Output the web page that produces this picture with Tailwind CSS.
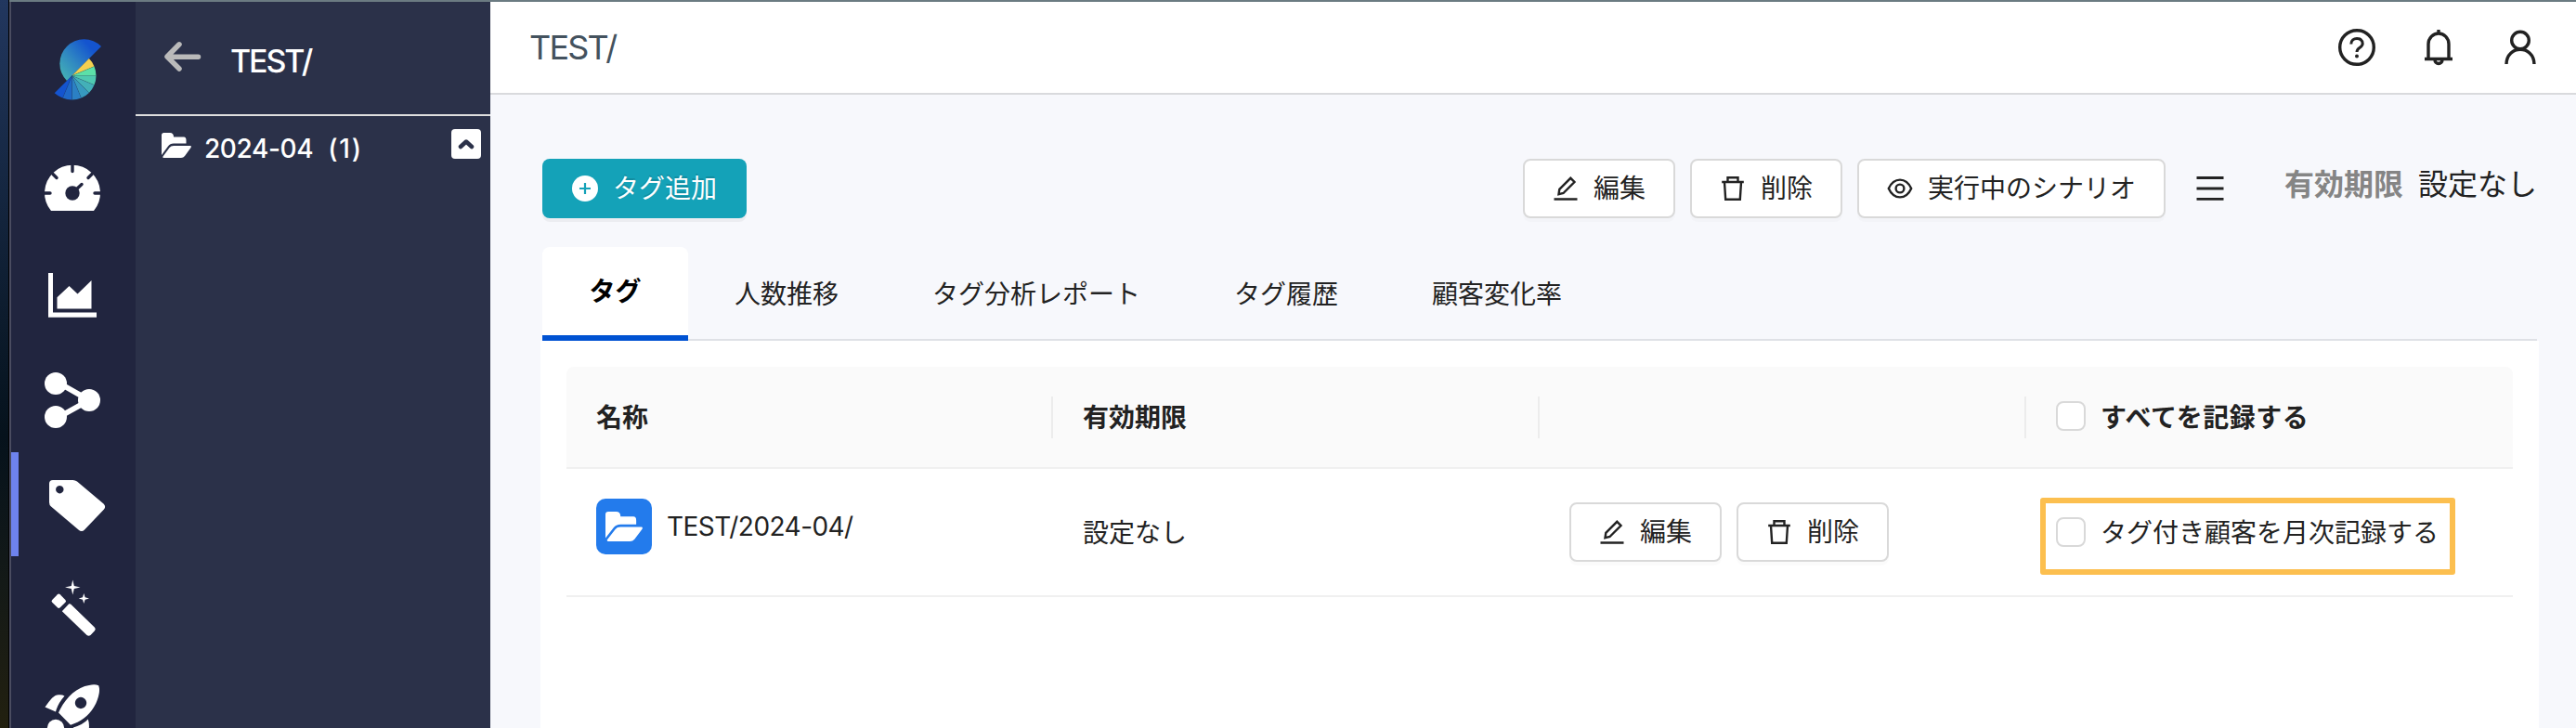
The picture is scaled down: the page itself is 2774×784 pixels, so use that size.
<!DOCTYPE html>
<html lang="ja">
<head>
<meta charset="utf-8">
<title>TEST/</title>
<script src="https://cdn.jsdelivr.net/npm/@tailwindcss/browser@4"></script>
</head>
<body class="flex h-[784px] w-[2774px] overflow-hidden bg-[#f7f8fc] font-[Inter,'Noto_Sans_CJK_JP',sans-serif] text-[28px] leading-[40px] text-[#222]">
<div class="w-[10px] shrink-0 border-r border-black bg-linear-to-b from-[#22375f] from-0% via-[#06121c] via-60% to-[#22200f] to-100%"></div>
<div class="flex h-full min-w-0 grow flex-col border-t-2 border-[#6b7b82]">
<div class="flex min-h-0 grow">

<!-- Icon rail -->
<nav class="flex w-[136px] shrink-0 flex-col overflow-hidden border-l-2 border-[#4a4c60] bg-[#21253f] *:-ml-[2px]">
<svg class="h-[149px] w-[136px] shrink-0" viewBox="10 2 136 149">
<defs><linearGradient id="g" gradientUnits="userSpaceOnUse" x1="66" y1="84" x2="100" y2="54"><stop stop-color="#45b3b5"/><stop offset=".5" stop-color="#2f86c2"/><stop offset="1" stop-color="#1454cf"/></linearGradient></defs>
<path fill="url(#g)" d="M109 50A26 26 0 1 0 72 87Z"/>
<g transform="translate(77.5 81.5)">
<path fill="#f4d04f" d="M0 0L18.4-18.4A26 26 0 0 1 24-10Z"/>
<path fill="#5ce0a8" d="M0 0L24-10A26 26 0 0 1 26 0Z"/>
<path fill="#4fc9b0" d="M0 0L26 0A26 26 0 0 1 24 10Z"/>
<path fill="#43b0b8" d="M0 0L24 10A26 26 0 0 1 18.4 18.4Z"/>
<path fill="#3799bf" d="M0 0L18.4 18.4A26 26 0 0 1 10 24Z"/>
<path fill="#2b80c4" d="M0 0L10 24A26 26 0 0 1 0 26Z"/>
<path fill="#1f68c8" d="M0 0L0 26A26 26 0 0 1 -10 24Z"/>
<path fill="#1454cf" d="M0 0L-10 24A26 26 0 0 1 -18.8 18.8Z"/>
<path stroke="#21253f" stroke-opacity=".3" stroke-width=".5" fill="none" d="M0 0L24-10M0 0L24 10M0 0L18.4 18.4M0 0L10 24M0 0V26M0 0L-10 24"/></g>
</svg>
<svg class="h-[112px] w-[136px] shrink-0" viewBox="10 151 136 112"><path fill="#fff" d="M55 227A30 30 0 1 1 101 227Z"/><circle cx="78" cy="208" r="7.7" fill="#21253f"/><path stroke="#21253f" stroke-width="3.4" stroke-linecap="round" d="M80 206L88 198.500M78 177v7.500M57 187.500l4 4M99 187.500l-4 4M47 208h7M109 208h-7"/></svg>
<svg class="h-[112px] w-[136px] shrink-0" viewBox="10 263 136 112"><path fill="#fff" d="M52 294h5v42.500h47v5.200H52zM61.500 320.300L74.500 308l9 8.500L98.500 302v30.500h-37z"/></svg>
<svg class="h-[112px] w-[136px] shrink-0" viewBox="10 375 136 112"><g fill="#fff"><circle cx="60" cy="413" r="12"/><circle cx="60" cy="449" r="12"/><circle cx="96" cy="431" r="12"/></g><path stroke="#fff" stroke-width="6" fill="none" d="M60 410.500L96 431L60 451"/></svg>
<div class="flex shrink-0"><div class="h-[112px] w-[10px] border-l-2 border-[#8f93f0] bg-[#6e83ee]"></div>
<svg class="h-[112px] w-[126px]" viewBox="20 487 126 112"><path fill="#fff" fill-rule="evenodd" d="M57 517H78.500Q81 517 83 518.500L111.500 542.500Q114.500 545.500 112 548.500L91 570.500Q88 573.500 84.500 570.500L55 545.500Q53 543.800 53 541V521Q53 517 57 517ZM64.300 523a4.200 4.200 0 1 0 .01 0Z"/></svg></div>
<svg class="h-[112px] w-[136px] shrink-0" viewBox="10 599 136 112"><g fill="#fff"><rect x="57.300" y="641.300" width="12" height="12" rx="2" transform="rotate(45 63.300 647.300)"/><path d="M74.300 650.300Q75.300 649.800 76.300 650.800L102 675.800Q103.500 677.500 102 679.300L97.500 683.900Q95.500 685.500 93.500 683.900L66.800 658.300Z"/><path d="M78.300 624.500L79.800 631L86.500 632.500L79.800 634L78.300 640.500L76.800 634L70 632.500L76.800 631ZM90.300 639L91.600 643.200L96 644.500L91.600 645.800L90.300 650L89 645.800L84.700 644.500L89 643.200Z"/></g></svg>
<svg class="h-[112px] w-[136px] shrink-0" viewBox="10 711 136 112"><g fill="#fff"><path fill-rule="evenodd" d="M63 767.500C70 752 82 740 96 738Q102 736.500 106.200 738.200Q108 743 106 750C102 765 91 776 76 780.800ZM87 750.800a6.200 6.200 0 1 0 .01 0Z"/><path d="M48.500 761.500C55 752 59 747.500 64 748.200Q67 748 69.500 749.500Q62 758 60 766.500ZM79 783.500Q90 780 94.800 774.500Q97 781 95 789H76Z"/><circle cx="60" cy="784" r="9.200"/></g></svg>
</nav>

<!-- Folder panel -->
<aside class="flex w-[382px] shrink-0 flex-col bg-[#2b3149] text-white">
<div class="flex h-[123px] shrink-0 items-center gap-[31px] border-b-2 border-[#dedede] pl-[30px] pb-[2px]">
<svg class="mb-[1px] h-[34px] w-[41px]" viewBox="0 0 41 34" fill="none" stroke="#bababa" stroke-width="5.500" stroke-linecap="round" stroke-linejoin="round"><path d="M17 3.800L4 17L17 30M5 17.200H37.500"/></svg>
<span class="mt-[8px] text-[34px] font-medium tracking-[-2.1px]">TEST/</span>
</div>
<div class="flex h-[66px] items-center pr-[10px] pl-[28px]">
<svg class="mb-[4px] h-[27px] w-[32px]" viewBox="0 0 32 27" fill="#fff"><path d="M0 2.500Q0 0 2.500 0H9Q13 0 13 4.500H24Q26.500 4.500 26.500 8V11.500H13Q9 11.500 7 14.500L0 24ZM1.500 25.500L8.500 16Q10 14 13 14H31Q32.500 14 31.500 16L25 25Q23.500 27 21 27H2.500Q1 27 1.500 25.500Z"/></svg>
<span class="mt-[3px] ml-[14px] font-medium tracking-[-0.4px]">2024-04</span><span class="mt-[3px] ml-[16px] font-medium tracking-[1.8px]">(1)</span>
<span class="mb-[6px] ml-auto flex size-[32px] items-center justify-center rounded-[4px] bg-white"><svg class="h-[12px] w-[18px]" viewBox="0 0 18 12" fill="none" stroke="#2b3149" stroke-width="4.500" stroke-linecap="round" stroke-linejoin="round"><path d="M3 9L9 3.500L15 9"/></svg></span>
</div>
</aside>

<main class="flex min-w-0 grow flex-col">
<header class="flex h-[100px] shrink-0 items-center border-b-2 border-[#d9dadd] bg-white pr-[38px] pl-[42px]">
<h1 class="text-[36px] tracking-[-1.8px] text-[#44525e]">TEST/</h1>
<div class="ml-auto flex items-center text-[#222]">
<svg class="h-[44px] w-[44px]" viewBox="0 0 44 44" fill="none" stroke="currentColor" stroke-width="3.400"><circle cx="22" cy="22" r="18.300"/><path stroke-width="3" d="M15.800 18.500C15.800 10.500 28.200 10.500 28.200 18C28.200 22.500 22 22 22 27"/><circle cx="22" cy="31.500" r="2" fill="currentColor" stroke="none"/></svg>
<svg class="ml-[44px] h-[44px] w-[44px]" viewBox="0 0 44 44" fill="none" stroke="currentColor" stroke-width="3.400"><path d="M11 34.500V18.500A11 11.500 0 0 1 33 18.500V34.500M7 34.500H37M22 3V8M18 35.500A4 4 0 0 0 26 35.500"/></svg>
<svg class="ml-[44px] h-[44px] w-[44px]" viewBox="0 0 44 44" fill="none" stroke="currentColor" stroke-width="3.400"><circle cx="22" cy="14.500" r="9.300"/><path d="M7 40C7.500 19 36.500 19 37 40"/></svg>
</div>
</header>

<!-- Toolbar -->
<div class="flex h-[162px] shrink-0 items-start pt-[69px] pr-[42px] pl-[56px]">
<button class="flex h-[64px] w-[220px] items-center gap-[16px] rounded-[8px] bg-[#14a2b8] pl-[32px] text-white shadow-[0_4px_0_rgba(0,0,0,0.045)]"><svg class="size-[28px]" viewBox="0 0 28 28"><circle cx="14" cy="14" r="14" fill="#fff"/><path stroke="#14a2b8" stroke-width="2.200" d="M8 14H20M14 8V20"/></svg><span class="text-shadow-[0_-2px_0_rgba(0,0,0,0.12)]">タグ追加</span></button>
<button class="ml-auto flex h-[64px] items-center gap-[16px] rounded-[8px] border-2 border-[#d9d9d9] bg-white px-[30px] shadow-[0_4px_0_rgba(0,0,0,0.016)]"><svg class="size-[28px]" viewBox="0 0 28 28" fill="none" stroke="currentColor" stroke-width="2.400"><path d="M1.500 25.500H26.500M6.500 20.200L7.300 14.800L19.300 2.800L23.500 7L11.500 19Z"/></svg><span>編集</span></button>
<button class="ml-[16px] flex h-[64px] items-center gap-[16px] rounded-[8px] border-2 border-[#d9d9d9] bg-white px-[30px] shadow-[0_4px_0_rgba(0,0,0,0.016)]"><svg class="size-[28px]" viewBox="0 0 28 28" fill="none" stroke="currentColor" stroke-width="2.400"><path d="M2.200 7H25.800M8.500 7V2.200H19.500V7M5 7L6.200 25.800H21.800L23 7"/></svg><span>削除</span></button>
<button class="ml-[16px] flex h-[64px] items-center gap-[16px] rounded-[8px] border-2 border-[#d9d9d9] bg-white px-[30px] shadow-[0_4px_0_rgba(0,0,0,0.016)]"><svg class="size-[28px]" viewBox="0 0 28 28" fill="none" stroke="currentColor" stroke-width="2.400"><path d="M1.800 14C7.500 1.500 20.500 1.500 26.200 14C20.500 26.500 7.500 26.500 1.800 14Z"/><circle cx="14" cy="14" r="4.400"/></svg><span>実行中のシナリオ</span></button>
<svg class="mt-[16px] ml-[32px] size-[32px]" viewBox="0 0 32 32" stroke="currentColor" stroke-width="2.800"><path d="M1.500 4.500H30.500M1.500 16H30.500M1.500 27.300H30.500"/></svg>
<div class="mt-[8px] ml-[64px] flex gap-[16px] text-[32px]"><span class="font-bold text-[#858585]">有効期限</span><span>設定なし</span></div>
</div>

<!-- Tabs -->
<div class="mr-[42px] ml-[56px] flex h-[103px] shrink-0 items-end bg-[linear-gradient(#dfe1e6,#dfe1e6)] bg-size-[100%_2px] bg-bottom bg-no-repeat">
<div class="flex h-[101px] w-[157px] justify-center rounded-t-[8px] border-b-[6px] border-[#0052d2] bg-white pt-[28px] font-bold text-black">タグ</div>
<div class="flex h-[101px] gap-[101px] pt-[31px] pl-[50px]"><span>人数推移</span><span>タグ分析レポート</span><span>タグ履歴</span><span>顧客変化率</span></div>
</div>

<section class="mr-[40px] ml-[54px] grow bg-white px-[28px] pt-[28px]">
<div class="grid h-[110px] grid-cols-4 items-center rounded-t-[8px] border-b-2 border-[#f0f0f0] bg-[#fafafa] font-bold text-[#222]">
<div class="flex h-[45px] items-center border-r-2 border-[#ececec] pl-[32px]"><span class="mt-[2px]">名称</span></div>
<div class="flex h-[45px] items-center border-r-2 border-[#ececec] pl-[32px]"><span class="mt-[2px]">有効期限</span></div>
<div class="flex h-[45px] items-center border-r-2 border-[#ececec]"></div>
<div class="flex h-[45px] items-center gap-[16px] pl-[32px]"><span class="mb-[2px] size-[32px] rounded-[8px] border-2 border-[#d9d9d9] bg-white"></span><span class="mt-[1px] tracking-[0.5px]">すべてを記録する</span></div>
</div>
<div class="grid h-[138px] grid-cols-4 items-center border-b-2 border-[#f0f0f0]">
<div class="flex items-center pb-[12px] pl-[32px]"><span class="flex size-[60px] items-center justify-center rounded-[10px] bg-[#237bec]"><svg class="h-[32px] w-[40px]" viewBox="0 0 32 27" preserveAspectRatio="none" fill="#fff"><path d="M0 2.500Q0 0 2.500 0H9Q13 0 13 4.500H24Q26.500 4.500 26.500 8V11.500H13Q9 11.500 7 14.500L0 24ZM1.500 25.500L8.500 16Q10 14 13 14H31Q32.500 14 31.500 16L25 25Q23.500 27 21 27H2.500Q1 27 1.500 25.500Z"/></svg></span><span class="ml-[16px] tracking-[-0.55px]">TEST/2024-04/</span></div>
<div class="pt-[2px] pl-[32px]">設定なし</div>
<div class="flex gap-[16px] pl-[32px]">
<button class="flex h-[64px] items-center gap-[16px] rounded-[8px] border-2 border-[#d9d9d9] bg-white px-[30px] shadow-[0_4px_0_rgba(0,0,0,0.016)]"><svg class="size-[28px]" viewBox="0 0 28 28" fill="none" stroke="currentColor" stroke-width="2.400"><path d="M1.500 25.500H26.500M6.500 20.200L7.300 14.800L19.300 2.800L23.500 7L11.500 19Z"/></svg><span>編集</span></button>
<button class="flex h-[64px] items-center gap-[16px] rounded-[8px] border-2 border-[#d9d9d9] bg-white px-[30px] shadow-[0_4px_0_rgba(0,0,0,0.016)]"><svg class="size-[28px]" viewBox="0 0 28 28" fill="none" stroke="currentColor" stroke-width="2.400"><path d="M2.200 7H25.800M8.500 7V2.200H19.500V7M5 7L6.200 25.800H21.800L23 7"/></svg><span>削除</span></button>
</div>
<div class="relative flex items-center gap-[16px] pl-[32px]"><span class="size-[32px] rounded-[8px] border-2 border-[#d9d9d9] bg-white"></span><span class="mt-[1px]">タグ付き顧客を月次記録する</span><span class="absolute -top-[17px] left-[15px] h-[83px] w-[447px] rounded-[3px] border-[6px] border-[#fcbf4f]"></span></div>
</div>
</section>
</main>
</div>
</div>
</body>
</html>
